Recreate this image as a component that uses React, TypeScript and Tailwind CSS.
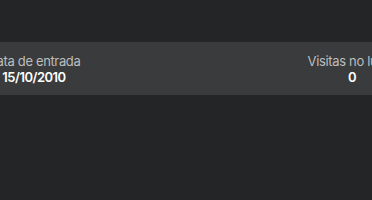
export default function App() {
  const stats = [
    { label: 'Data de entrada', value: '15/10/2010' },
    { label: 'Visitas no lugar', value: '0' },
  ];

  return (
    <div className="h-[200px] w-full overflow-hidden bg-[#232527] font-['Inter',sans-serif]">
      <div className="mt-[42px] flex h-[53px] items-center bg-[#393b3d]">
        <div className="ml-[-26px] w-[120px] shrink-0 text-center tracking-[-0.35px]">
          <p className="text-[13px] leading-4 text-[#bdbebe]">{stats[0].label}</p>
          <p className="text-[13px] font-semibold leading-4 tracking-[-0.5px] text-white">{stats[0].value}</p>
        </div>
        <div className="ml-auto mr-[-40px] w-[120px] shrink-0 text-center tracking-[-0.35px]">
          <p className="text-[13px] leading-4 text-[#bdbebe]">{stats[1].label}</p>
          <p className="text-[13px] font-semibold leading-4 text-white">{stats[1].value}</p>
        </div>
      </div>
    </div>
  );
}
